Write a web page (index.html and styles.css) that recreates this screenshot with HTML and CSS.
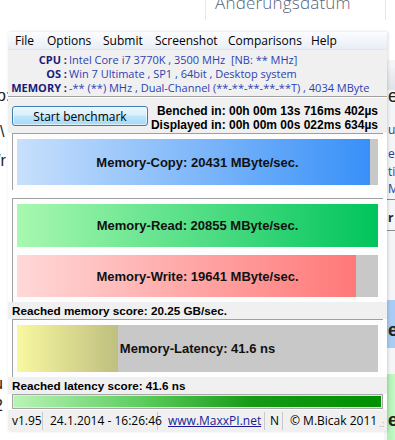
FILE: index.html
```html
<!DOCTYPE html>
<html lang="en">
<head>
    <meta charset="UTF-8">
    <meta name="viewport" content="width=device-width, initial-scale=1.0">
    <title>MaxxMEM - Memory Benchmark</title>
    <link rel="stylesheet" href="styles.css">
</head>
<body>
    <div class="desktop">
        <!-- explorer window behind -->
        <div class="explorer-head">
            <span class="col-line"></span>
            <span class="col-title">Änderungsdatum</span>
            <span class="col-line right"></span>
        </div>
        <div class="left-scraps">
            <span class="scrap s1">o:</span>
            <span class="scrap s2">\</span>
            <span class="scrap s3">/r</span>
            <span class="scrap s4">u</span>
            <span class="scrap s5">2</span>
        </div>
        <div class="right-window">
            <div class="rw-bar"></div>
            <span class="rw-text big">e</span>
            <span class="rw-text blue t1">u</span>
            <span class="rw-text blue t2">e</span>
            <span class="rw-text blue t3">ti</span>
            <span class="rw-text blue t4">M</span>
            <span class="rw-line l1"></span>
            <span class="rw-line l2"></span>
            <span class="rw-text t5">r</span>
            <div class="rw-blue"></div>
            <span class="rw-text big t6">er</span>
            <div class="rw-green"></div>
            <span class="rw-text big t7">er</span>
        </div>

        <!-- benchmark window -->
        <div class="app">
            <div class="menubar">
                <span class="m-file">File</span>
                <span class="m-options">Options</span>
                <span class="m-submit">Submit</span>
                <span class="m-shot">Screenshot</span>
                <span class="m-comp">Comparisons</span>
                <span>Help</span>
            </div>

            <div class="sysinfo">
                <span class="label">CPU :</span>
                <span class="value">Intel Core i7 3770K , 3500 MHz &nbsp;[NB: ** MHz]</span>
                <span class="label">OS :</span>
                <span class="value">Win 7 Ultimate , SP1 , 64bit , Desktop system</span>
                <span class="label">MEMORY :</span>
                <span class="value">-** (**) MHz , Dual-Channel (**-**-**-**-**T) , 4034 MByte</span>
            </div>

            <div class="actions">
                <button class="start-btn">Start benchmark</button>
                <div class="timings">
                    <div>Benched in: 00h 00m 13s 716ms 402µs</div>
                    <div>Displayed in: 00h 00m 00s 022ms 634µs</div>
                </div>
            </div>

            <div class="group">
                <div class="bar copy" style="height: 46px">
                    <div class="fill" style="width: 353px"></div>
                    <span class="bar-label">Memory-Copy: 20431 MByte/sec.</span>
                </div>
            </div>

            <div class="group two">
                <div class="bar read" style="height: 43px">
                    <div class="fill" style="width: 361px"></div>
                    <span class="bar-label">Memory-Read: 20855 MByte/sec.</span>
                </div>
                <div class="bar write" style="height: 42px">
                    <div class="fill" style="width: 339px"></div>
                    <span class="bar-label">Memory-Write: 19641 MByte/sec.</span>
                </div>
            </div>

            <div class="score">Reached memory score: 20.25 GB/sec.</div>

            <div class="group latency-group">
                <div class="bar latency" style="height: 47px">
                    <div class="fill" style="width: 101px"></div>
                    <span class="bar-label">Memory-Latency: 41.6 ns</span>
                </div>
            </div>

            <div class="score">Reached latency score: 41.6 ns</div>

            <div class="progress"><div class="progress-fill"></div></div>

            <div class="statusbar">
                <span class="cell ver">v1.95</span>
                <span class="cell date">24.1.2014 - 16:26:46</span>
                <span class="cell link">www.MaxxPI.net</span>
                <span class="cell mode">N</span>
                <span class="cell copy-note">© M.Bicak 2011</span>
                <span class="grip">.:</span>
            </div>
        </div>
    </div>
</body>
</html>
```

FILE: styles.css
```css
body {
    margin: 0;
    padding: 0;
    font-family: "Open Sans", "Noto Sans", sans-serif;
    background: #ffffff;
}

.desktop {
    position: relative;
    width: 395px;
    height: 440px;
    overflow: hidden;
    background: #ffffff;
}

/* things behind the main window */
.explorer-head {
    position: absolute;
    left: 0;
    top: 0;
    width: 395px;
    height: 22px;
}

.col-line {
    position: absolute;
    left: 205px;
    top: 0;
    width: 1px;
    height: 20px;
    background: #e3e6ea;
}

.col-line.right {
    left: 385px;
}

.col-title {
    position: absolute;
    left: 215px;
    top: -9px;
    font-size: 17px;
    font-weight: 300;
    color: #56657d;
    letter-spacing: 0.2px;
}

.scrap {
    position: absolute;
    font-size: 16px;
    line-height: 16px;
    color: #222;
    font-family: "Liberation Sans", sans-serif;
}

.s1 { left: -3px; top: 88px; }
.s2 { left: 0; top: 124px; }
.s3 { left: -4px; top: 153px; }
.s4 { left: -6px; top: 376px; }
.s5 { left: -6px; top: 398px; }

.right-window {
    position: absolute;
    left: 384px;
    top: 60px;
    width: 11px;
    height: 380px;
    background: #f4f5f7;
    overflow: hidden;
}

.rw-bar {
    position: absolute;
    left: 0;
    top: 8px;
    width: 11px;
    height: 22px;
    background: linear-gradient(#eef1f5, #dfe4ea);
}

.rw-text {
    position: absolute;
    left: 4px;
    font-size: 12px;
    line-height: 11px;
    color: #222;
}

.rw-text.big {
    font-size: 18px;
    line-height: 16px;
    top: 28px;
    font-family: "Liberation Sans", sans-serif;
}

.rw-text.blue {
    color: #2b3f9a;
}

.t1 { top: 64px; }
.t2 { top: 88px; }
.t3 { top: 106px; }
.t4 { top: 123px; }
.t5 { top: 152px; font-weight: bold; }

.rw-line {
    position: absolute;
    left: 3px;
    width: 8px;
    height: 1px;
    background: #8c8c8c;
}

.l1 { top: 139px; }
.l2 { top: 170px; }

.rw-blue {
    position: absolute;
    left: 3px;
    top: 240px;
    width: 8px;
    height: 48px;
    background: #a8ccf5;
}

.rw-text.t6 {
    top: 262px;
    font-weight: bold;
}

.rw-green {
    position: absolute;
    left: 3px;
    top: 314px;
    width: 8px;
    height: 66px;
    background: linear-gradient(90deg, #a8f0b0, #c8f8c8);
}

.rw-text.t7 {
    top: 352px;
    font-weight: bold;
}

/* main window */
.app {
    position: absolute;
    left: 8px;
    top: 32px;
    width: 379px;
    background: #ffffff;
    box-shadow: 1px 0 3px rgba(0, 0, 0, 0.15);
}

.menubar {
    display: flex;
    height: 17px;
    align-items: center;
    padding-left: 7px;
    font-size: 12px;
    color: #000;
    white-space: nowrap;
    background: linear-gradient(#fbfcfe, #e9eef6);
    border-bottom: 1px solid #dfe6f0;
}

.m-file { width: 32px; }
.m-options { width: 56px; }
.m-submit { width: 52px; }
.m-shot { width: 73px; }
.m-comp { width: 83px; }

.sysinfo {
    display: grid;
    grid-template-columns: 59px auto;
    column-gap: 2px;
    padding: 3px 0 1px 0;
    background: #f0f0f0;
    font-size: 11px;
    line-height: 14px;
    white-space: nowrap;
}

.sysinfo .label {
    text-align: right;
    font-weight: bold;
    color: #1b1b78;
}

.sysinfo .value {
    color: #2c3fb2;
}

.actions {
    display: flex;
    justify-content: space-between;
    align-items: flex-start;
    height: 36px;
    padding: 0 9px 0 4px;
    background: #f0f0f0;
    border-top: 1px solid #a0a0a0;
    box-shadow: inset 0 1px 0 #ffffff;
}

.start-btn {
    margin-top: 9px;
    width: 136px;
    height: 20px;
    padding: 0;
    border: 1px solid #3c7fb1;
    border-radius: 3px;
    background: linear-gradient(#eaf6fd 0%, #d9f0fc 45%, #bee6fd 50%, #a7d9f5 100%);
    box-shadow: inset 0 0 0 1px rgba(255, 255, 255, 0.6);
    font-family: "Open Sans", sans-serif;
    font-size: 12px;
    color: #000;
}

.timings {
    margin-top: 7px;
    text-align: right;
    font-family: "Liberation Sans", sans-serif;
    font-weight: bold;
    font-size: 12px;
    line-height: 14px;
    color: #000;
}

.group {
    display: flex;
    flex-direction: column;
    gap: 8px;
    margin: 0 4px 8px 4px;
    padding: 5px 5px 5px 4px;
    border-top: 1px solid #a0a0a0;
    border-left: 1px solid #a0a0a0;
    background: #fdfdfd;
}

.group.two,
.group.latency-group {
    margin-bottom: 0;
}

.bar {
    position: relative;
    background: #c8c8c8;
    display: flex;
    align-items: center;
    justify-content: center;
}

.bar .fill {
    position: absolute;
    left: 0;
    top: 0;
    bottom: 0;
}

.bar-label {
    position: relative;
    font-family: "Liberation Sans", sans-serif;
    font-weight: bold;
    font-size: 13px;
    color: #111;
}

.copy .fill { background: linear-gradient(90deg, #c8e0fc, #3890f8); }
.read .fill { background: linear-gradient(90deg, #a8f8b0, #00c45c); }
.write .fill { background: linear-gradient(90deg, #ffd8d8, #ff7878); }
.latency .fill { background: linear-gradient(90deg, #f8f8a0, #bfbf80); }

.score {
    height: 17px;
    padding-left: 4px;
    background: #f0f0f0;
    font-family: "Liberation Sans", sans-serif;
    font-weight: bold;
    font-size: 11.7px;
    line-height: 18px;
    color: #000;
}

.progress {
    margin: 0 4px;
    height: 11px;
    padding: 1px;
    border: 1px solid #a8a8a8;
    background: #e6e6e6;
}

.progress-fill {
    height: 100%;
    background: linear-gradient(90deg, #b8f4b8 0%, #5ccc5c 35%, #159a15 65%, #009000 100%);
}

.statusbar {
    position: relative;
    display: flex;
    align-items: center;
    height: 21px;
    background: #f0f0f0;
    border-top: 1px solid #ffffff;
    font-size: 12px;
    color: #000;
    white-space: nowrap;
}

.cell {
    box-sizing: border-box;
    border-right: 1px solid #c9c9c9;
    line-height: 18px;
}

.cell.ver { width: 35px; padding-left: 4px; }
.cell.date { width: 115px; padding-left: 7px; }
.cell.link {
    width: 107px;
    padding-left: 10px;
    color: #1a1a9a;
    text-decoration: underline;
}
.cell.mode { width: 18px; padding-left: 5px; }
.cell.copy-note { border-right: none; padding-left: 7px; }

.grip {
    position: absolute;
    right: 3px;
    bottom: 1px;
    font-size: 9px;
    color: #a0a0a0;
}
```
